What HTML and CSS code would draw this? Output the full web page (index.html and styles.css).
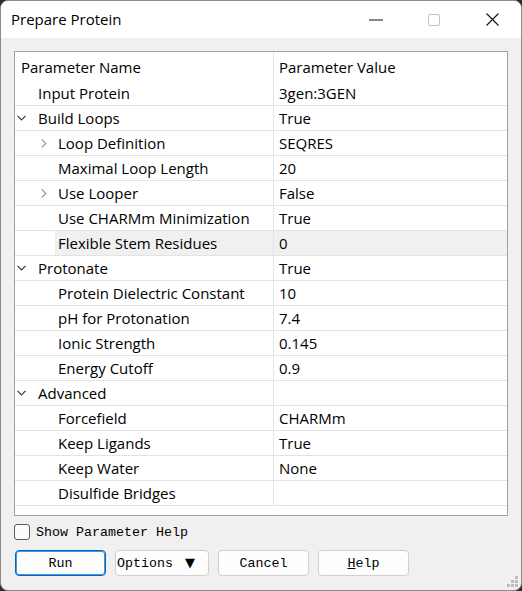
FILE: index.html
```html
<!DOCTYPE html>
<html>
<head>
<meta charset="utf-8">
<link rel="stylesheet" href="styles.css">
</head>
<body>
<div class="window">
  <div class="titlebar">
    <div class="title">Prepare Protein</div>
    <div class="tb-btn"><svg width="14" height="2" viewBox="0 0 14 2"><rect x="0" y="0.5" width="14" height="1" fill="#111"/></svg></div>
    <div class="tb-btn"><svg width="12" height="12" viewBox="0 0 12 12"><rect x="0.5" y="0.5" width="11" height="11" rx="1.5" fill="none" stroke="#c4c4c4"/></svg></div>
    <div class="tb-btn"><svg width="13" height="13" viewBox="0 0 13 13"><path d="M0.5 0.5 L12.5 12.5 M12.5 0.5 L0.5 12.5" stroke="#111" stroke-width="1.1"/></svg></div>
  </div>
  <div class="content">
    <div class="tree">
      <div class="row header">
        <div class="name"><span class="htext">Parameter Name</span></div>
        <div class="value">Parameter Value</div>
      </div>
      <div class="row"><div class="name l0"><span class="slot"></span><span class="label">Input Protein</span></div><div class="value">3gen:3GEN</div></div>
      <div class="row"><div class="name l0"><span class="slot"><svg class="down" width="9" height="6" viewBox="0 0 9 6"><path d="M0.5 0.8 L4.5 4.8 L8.5 0.8" fill="none" stroke="#3a3a3a" stroke-width="1.2"/></svg></span><span class="label">Build Loops</span></div><div class="value">True</div></div>
      <div class="row"><div class="name l1"><span class="slot"></span><span class="slot"><svg class="right" width="6" height="9" viewBox="0 0 6 9"><path d="M0.8 0.5 L4.8 4.5 L0.8 8.5" fill="none" stroke="#999" stroke-width="1.2"/></svg></span><span class="label">Loop Definition</span></div><div class="value">SEQRES</div></div>
      <div class="row"><div class="name l1"><span class="slot"></span><span class="slot"></span><span class="label">Maximal Loop Length</span></div><div class="value">20</div></div>
      <div class="row"><div class="name l1"><span class="slot"></span><span class="slot"><svg class="right" width="6" height="9" viewBox="0 0 6 9"><path d="M0.8 0.5 L4.8 4.5 L0.8 8.5" fill="none" stroke="#999" stroke-width="1.2"/></svg></span><span class="label">Use Looper</span></div><div class="value">False</div></div>
      <div class="row"><div class="name l1"><span class="slot"></span><span class="slot"></span><span class="label">Use CHARMm Minimization</span></div><div class="value">True</div></div>
      <div class="row hl"><div class="name l1"><span class="slot"></span><span class="slot"></span><span class="label">Flexible Stem Residues</span></div><div class="value">0</div></div>
      <div class="row"><div class="name l0"><span class="slot"><svg class="down" width="9" height="6" viewBox="0 0 9 6"><path d="M0.5 0.8 L4.5 4.8 L8.5 0.8" fill="none" stroke="#3a3a3a" stroke-width="1.2"/></svg></span><span class="label">Protonate</span></div><div class="value">True</div></div>
      <div class="row"><div class="name l1"><span class="slot"></span><span class="slot"></span><span class="label">Protein Dielectric Constant</span></div><div class="value">10</div></div>
      <div class="row"><div class="name l1"><span class="slot"></span><span class="slot"></span><span class="label">pH for Protonation</span></div><div class="value">7.4</div></div>
      <div class="row"><div class="name l1"><span class="slot"></span><span class="slot"></span><span class="label">Ionic Strength</span></div><div class="value">0.145</div></div>
      <div class="row"><div class="name l1"><span class="slot"></span><span class="slot"></span><span class="label">Energy Cutoff</span></div><div class="value">0.9</div></div>
      <div class="row"><div class="name l0"><span class="slot"><svg class="down" width="9" height="6" viewBox="0 0 9 6"><path d="M0.5 0.8 L4.5 4.8 L8.5 0.8" fill="none" stroke="#3a3a3a" stroke-width="1.2"/></svg></span><span class="label">Advanced</span></div><div class="value"></div></div>
      <div class="row"><div class="name l1"><span class="slot"></span><span class="slot"></span><span class="label">Forcefield</span></div><div class="value">CHARMm</div></div>
      <div class="row"><div class="name l1"><span class="slot"></span><span class="slot"></span><span class="label">Keep Ligands</span></div><div class="value">True</div></div>
      <div class="row"><div class="name l1"><span class="slot"></span><span class="slot"></span><span class="label">Keep Water</span></div><div class="value">None</div></div>
      <div class="row"><div class="name l1"><span class="slot"></span><span class="slot"></span><span class="label">Disulfide Bridges</span></div><div class="value"></div></div>
    </div>
    <label class="check"><span class="box"></span><span>Show Parameter Help</span></label>
    <div class="buttons">
      <button class="btn default">Run</button>
      <button class="btn options">Options <span class="tri">▼</span></button>
      <button class="btn">Cancel</button>
      <button class="btn"><u>H</u>elp</button>
    </div>
  </div>
  <svg class="grip" width="12" height="12" viewBox="0 0 12 12">
    <rect x="8" y="0" width="3" height="3" fill="#bdbdbd"/>
    <rect x="4" y="4" width="3" height="3" fill="#bdbdbd"/>
    <rect x="8" y="4" width="3" height="3" fill="#bdbdbd"/>
    <rect x="0" y="8" width="3" height="3" fill="#bdbdbd"/>
    <rect x="4" y="8" width="3" height="3" fill="#bdbdbd"/>
    <rect x="8" y="8" width="3" height="3" fill="#bdbdbd"/>
  </svg>
</div>
</body>
</html>
```
FILE: styles.css
```css
html, body {
  margin: 0;
  padding: 0;
  background: #2b2b2b;
}
.window {
  position: relative;
  width: 522px;
  height: 591px;
  box-sizing: border-box;
  border: 1px solid #8c8c8c;
  border-radius: 8px;
  background: #f0f0f0;
  overflow: hidden;
  font-family: "Open Sans", "Noto Sans", sans-serif;
  font-size: 15px;
  color: #000;
}
.titlebar {
  height: 37px;
  background: #fff;
  display: flex;
  align-items: center;
}
.title {
  flex: 1;
  padding-left: 10px;
  font-size: 15px;
  color: #000;
  padding-bottom: 1px;
}
.tb-btn {
  width: 58px;
  height: 37px;
  display: flex;
  align-items: center;
  justify-content: center;
}
.content {
  padding: 13px 13px 0 13px;
  display: flex;
  flex-direction: column;
}
.tree {
  height: 465px;
  box-sizing: border-box;
  border: 1px solid #a0a0a0;
  background: #fff;
}
.row {
  display: grid;
  grid-template-columns: 259px 1fr;
  height: 25px;
  box-sizing: border-box;
  border-bottom: 1px solid #e3e3e3;
}
.row.header {
  height: 29px;
  border-bottom: none;
}
.name {
  display: flex;
  align-items: stretch;
  border-right: 1px solid #e3e3e3;
  white-space: nowrap;
  overflow: hidden;
}
.htext {
  padding-left: 6px;
  display: flex;
  align-items: center;
}
.slot {
  width: 20px;
  flex: none;
  display: flex;
  align-items: center;
}
.slot .down {
  margin-left: 2px;
}
.slot .right {
  margin-left: 6px;
}
.label {
  flex: 1;
  display: flex;
  align-items: center;
  padding-left: 3px;
}
.value {
  display: flex;
  align-items: center;
  padding-left: 5px;
  white-space: nowrap;
}
.row.hl .label, .row.hl .value {
  background: #f0f0f0;
}
.check {
  display: flex;
  align-items: center;
  margin-top: 7px;
  height: 18px;
  font-family: "Liberation Mono", monospace;
  font-size: 13.33px;
}
.box {
  width: 14px;
  height: 14px;
  border: 1px solid #5c5c5c;
  border-radius: 3px;
  background: #fbfbfb;
  margin-right: 6px;
}
.buttons {
  display: flex;
  gap: 9px;
  margin-top: 9px;
  margin-left: 1px;
}
.btn {
  height: 26px;
  width: 91px;
  box-sizing: border-box;
  border: 1px solid #d0d0d0;
  border-radius: 4px;
  background: #fdfdfd;
  font-family: "Liberation Mono", monospace;
  font-size: 13.33px;
  color: #000;
  padding: 0;
}
.btn.default {
  border: 1px solid #0067c0;
  box-shadow: inset 0 0 0 1px #4a95d6;
}
.btn.options {
  width: 94px;
  text-align: left;
  padding-left: 1px;
}
.tri {
  font-family: "DejaVu Sans", sans-serif;
  font-size: 13px;
  margin-left: 4px;
}
.grip {
  position: absolute;
  right: 2px;
  bottom: 2px;
}
```
